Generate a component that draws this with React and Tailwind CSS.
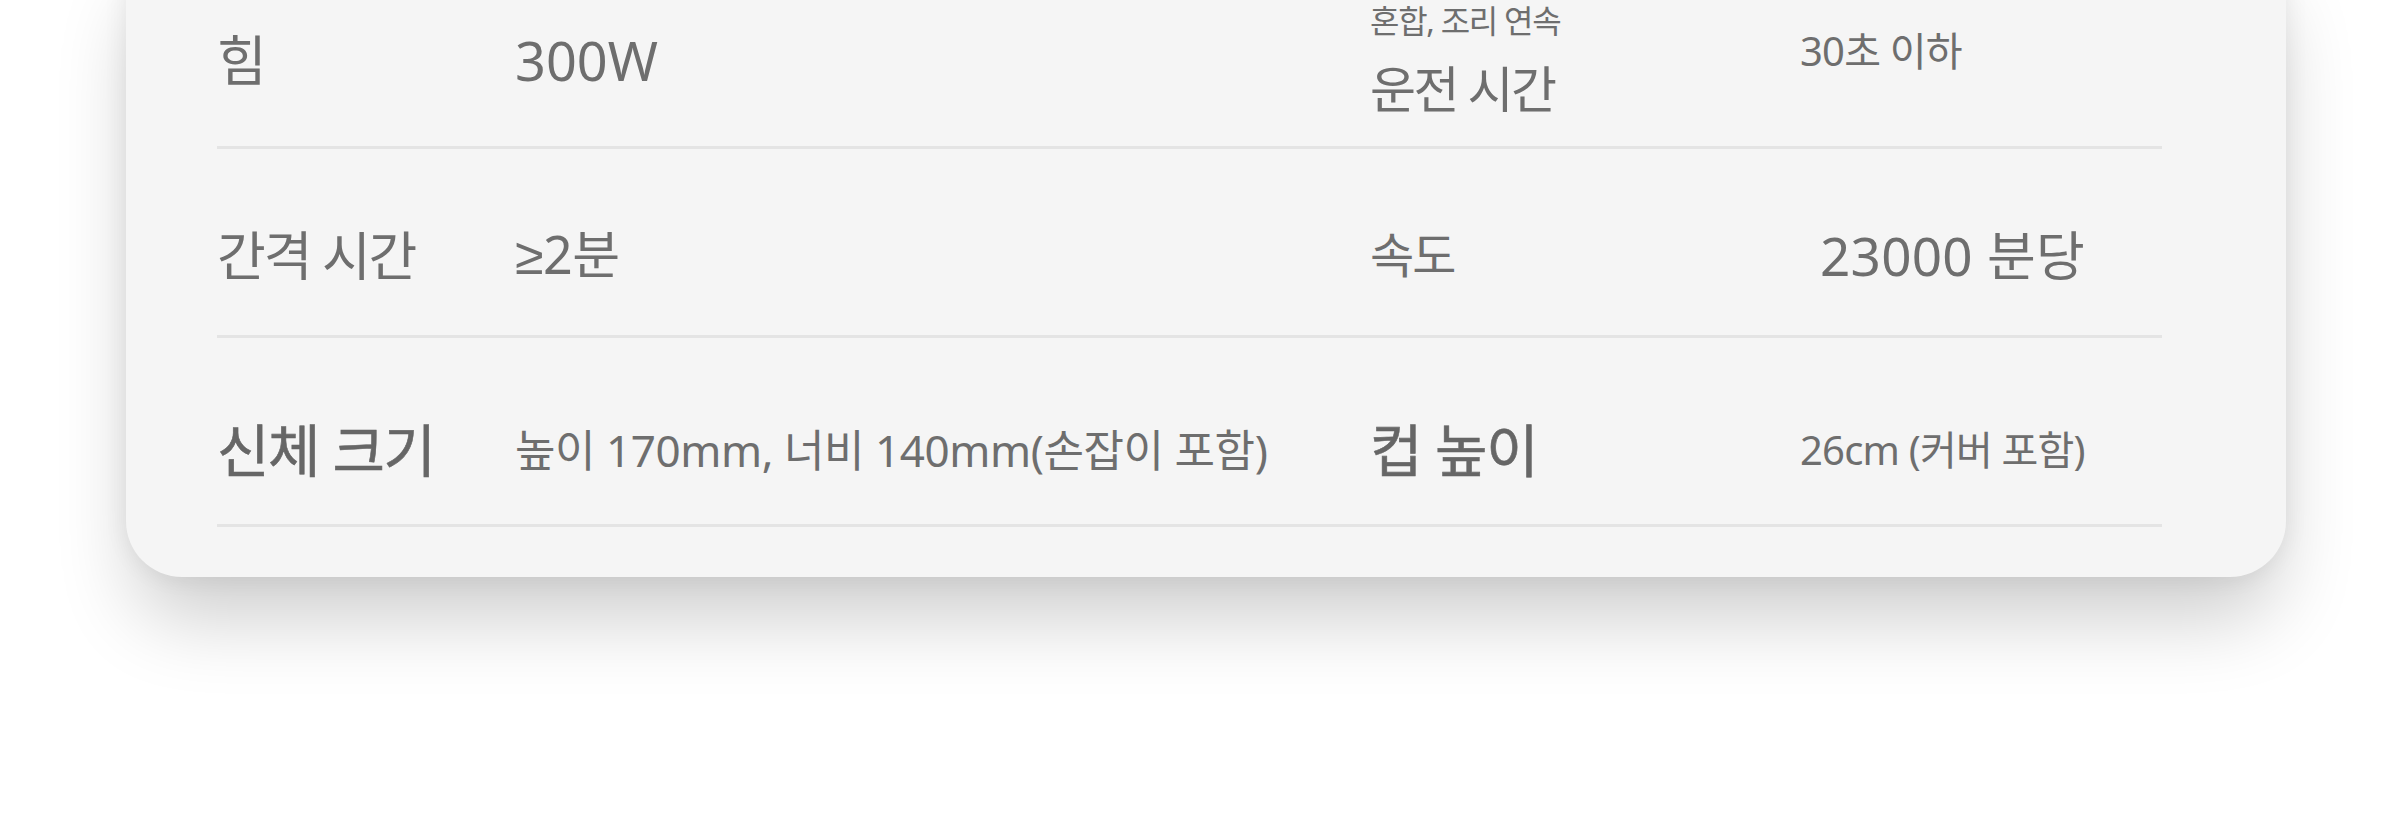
import React from "react";

const rows = [
  {
    key: "power",
    pad: "pt-[14px]",
    label: <span className="text-[54px]">힘</span>,
    value: <span className="text-[54px]">300W</span>,
    label2: (
      <div className="flex flex-col">
        <span className="text-[32px] leading-[40px] tracking-[-0.04em]">혼합, 조리 연속</span>
        <span className="mt-[18px] text-[50px] leading-[60px] tracking-[-0.05em]">운전 시간</span>
      </div>
    ),
    value2: <span className="mb-[18px] text-[40px] tracking-[-0.02em]">30초 이하</span>,
  },
  {
    key: "interval",
    pad: "pt-[26px]",
    label: <span className="text-[53px] tracking-[-0.04em]">간격 시간</span>,
    value: (
      <span className="text-[52px] tracking-[-0.01em]">
        <span className="font-['Liberation_Sans',sans-serif]">≥</span>2분
      </span>
    ),
    label2: <span className="text-[48px] tracking-[-0.04em]">속도</span>,
    value2: <span className="pl-[20px] text-[53px] tracking-[0.005em]">23000 분당</span>,
  },
  {
    key: "size",
    pad: "pt-[38px]",
    label: (
      <span className="text-[57px] tracking-[-0.025em] text-[#666666] [-webkit-text-stroke:0.6px_#666666]">
        신체 크기
      </span>
    ),
    value: <span className="text-[44px] tracking-[-0.01em]">높이 170mm, 너비 140mm(손잡이 포함)</span>,
    label2: (
      <span className="text-[57px] tracking-[-0.02em] text-[#666666] [-webkit-text-stroke:0.6px_#666666]">
        컵 높이
      </span>
    ),
    value2: <span className="text-[40px] tracking-[-0.02em]">26cm (커버 포함)</span>,
  },
];

export default function SpecTable() {
  return (
    <div className="min-h-[830px] overflow-hidden bg-white font-['Noto_Sans','Noto_Sans_CJK_KR',sans-serif] text-[#6e6e6e]">
      <div className="mt-[-63px] ml-[126px] mr-[118px] rounded-[56px] bg-[#f5f5f5] pt-[23px] pb-[50px] pl-[91px] pr-[124px] shadow-[0_50px_80px_-10px_rgba(0,0,0,0.2),0_0_24px_rgba(0,0,0,0.07)]">
        {rows.map((row) => (
          <div
            key={row.key}
            className={`grid h-[189px] grid-cols-[298px_855px_430px_1fr] items-center border-b-[3px] border-[#e4e4e4] leading-none ${row.pad}`}
          >
            <div className="flex items-center">{row.label}</div>
            <div className="flex items-center">{row.value}</div>
            <div className="flex items-center">{row.label2}</div>
            <div className="flex items-center">{row.value2}</div>
          </div>
        ))}
      </div>
    </div>
  );
}
